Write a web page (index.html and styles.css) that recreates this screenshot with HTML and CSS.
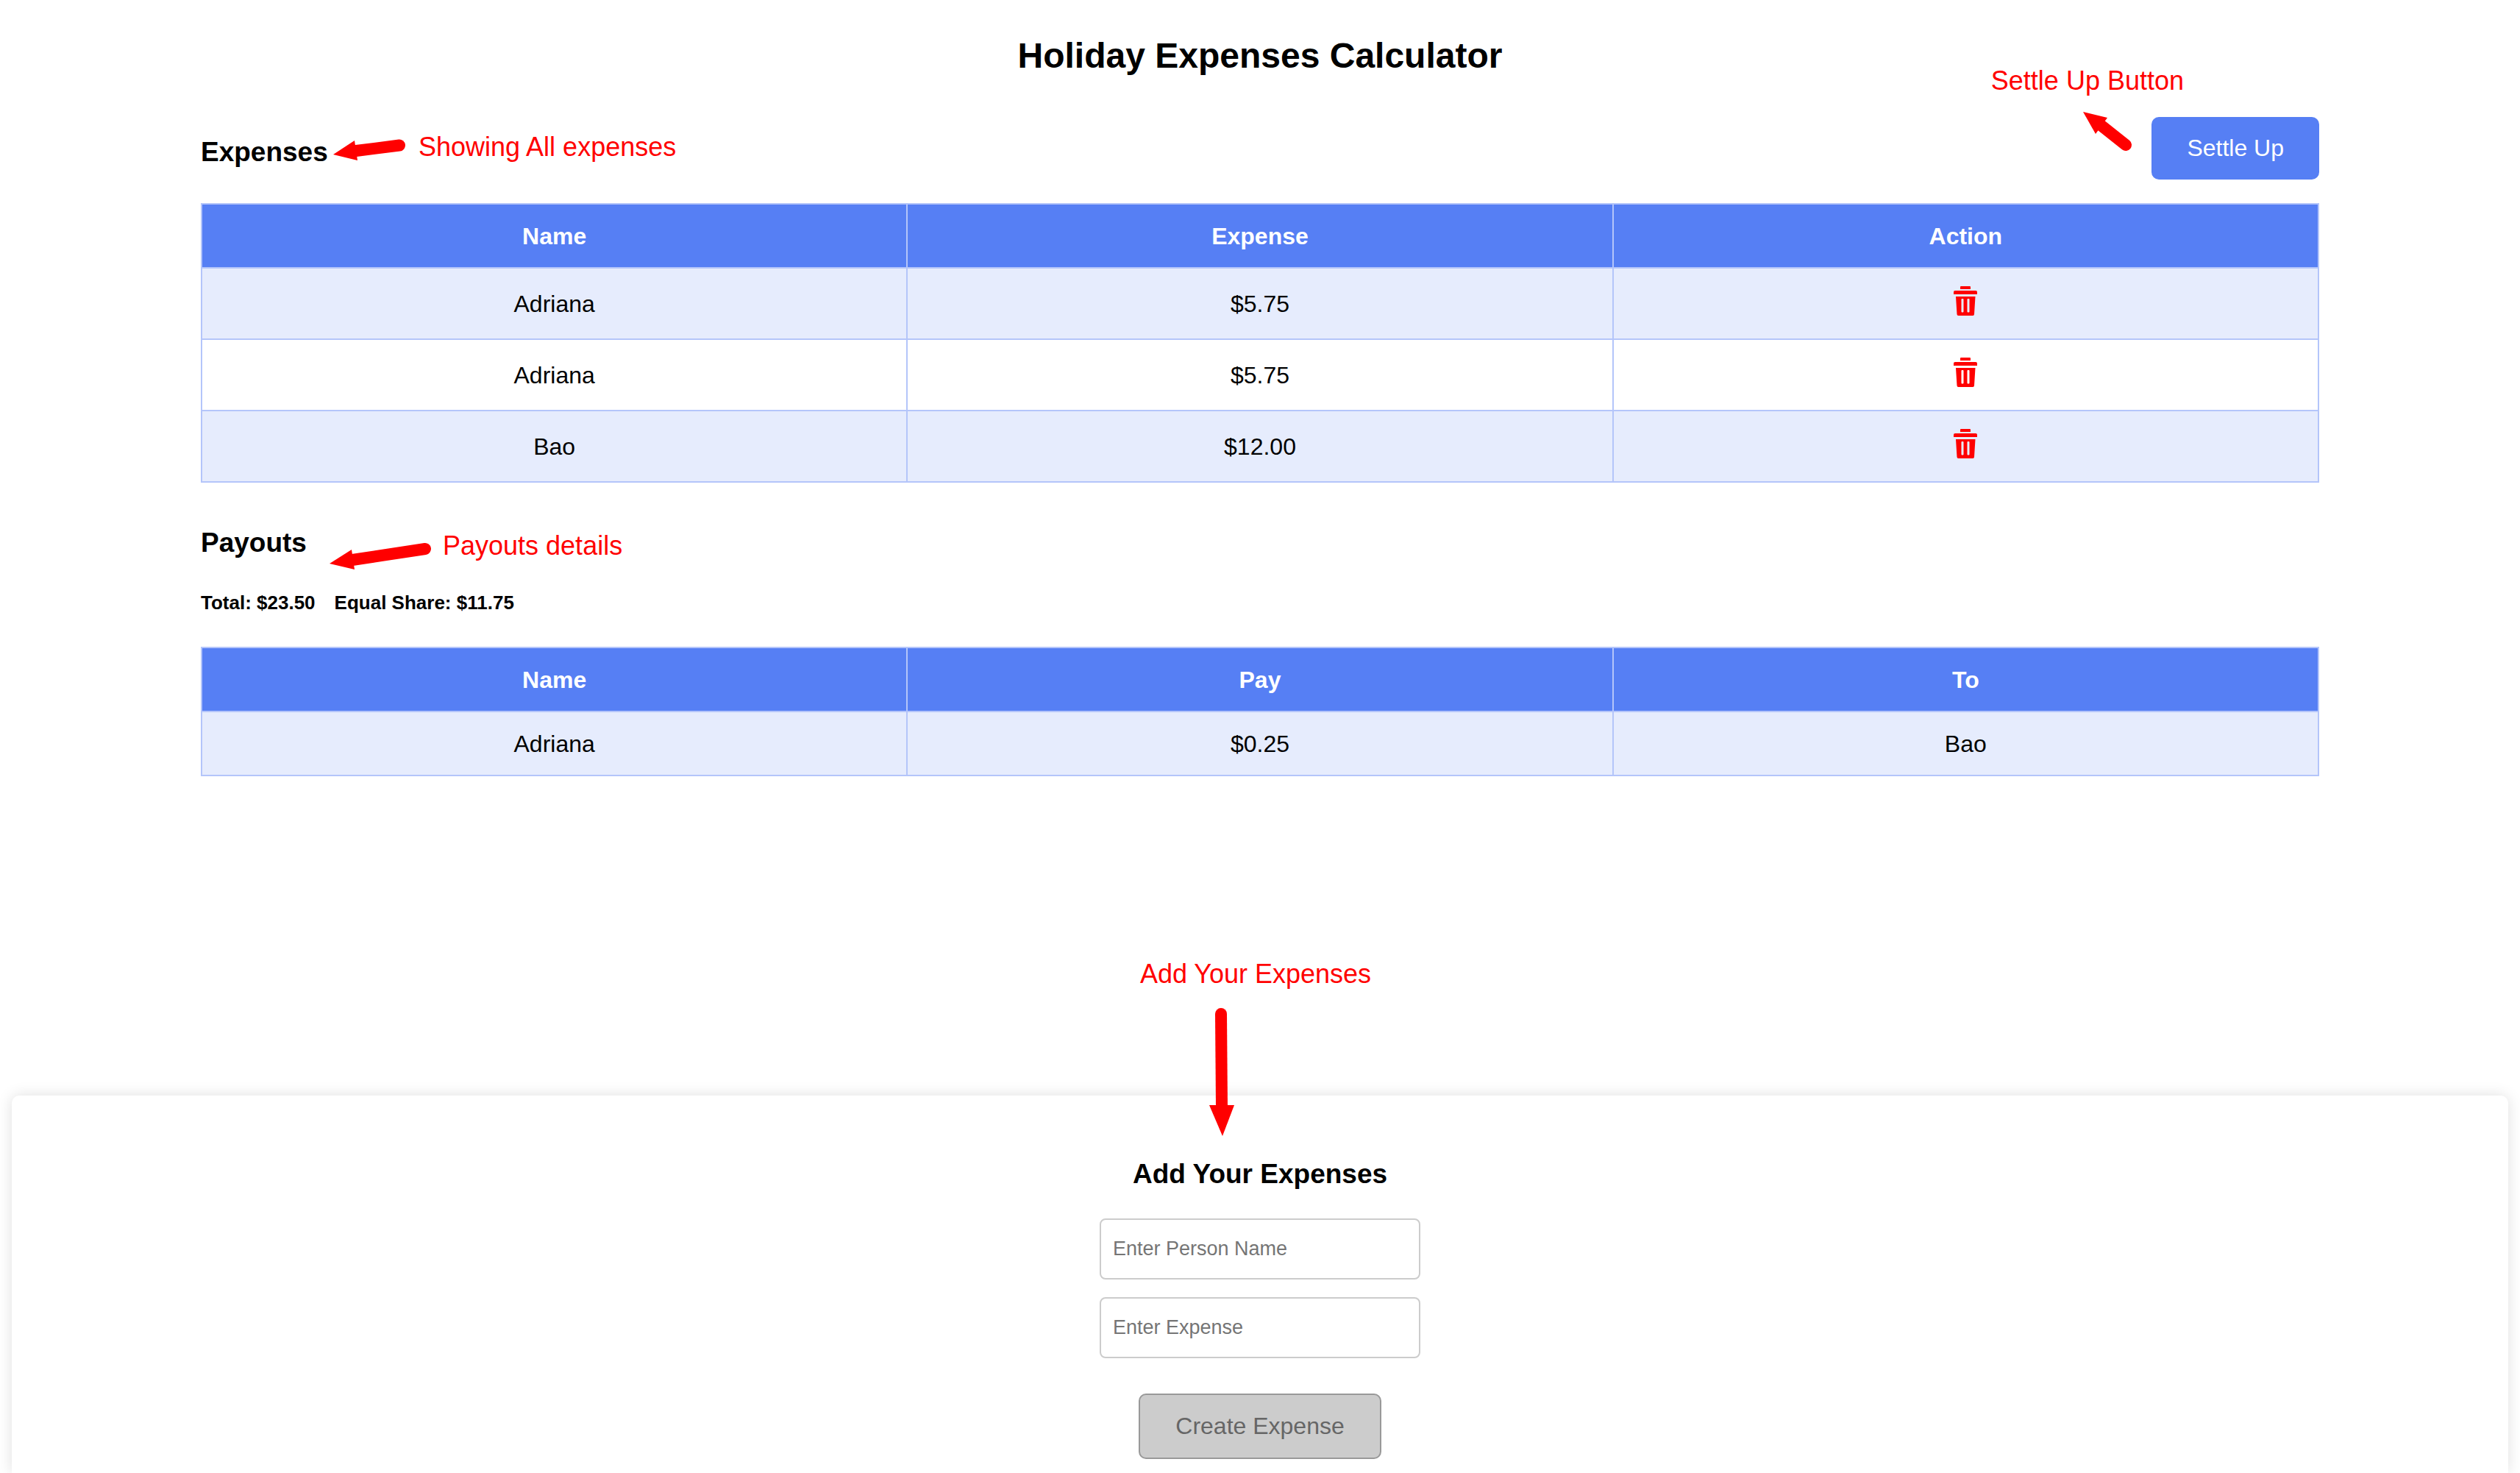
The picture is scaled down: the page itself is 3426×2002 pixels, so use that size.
FILE: index.html
```html
<!DOCTYPE html>
<html lang="en">
<head>
  <meta charset="utf-8">
  <meta name="viewport" content="width=device-width, initial-scale=1">
  <title>Holiday Expenses Calculator</title>
  <link rel="stylesheet" href="styles.css">
</head>
<body>
  <svg class="sprite" aria-hidden="true">
    <symbol id="trash" viewBox="0 0 32 40">
      <path d="M10 0h12a1 1 0 0 1 1 1v3H9V1a1 1 0 0 1 1-1z"/>
      <path d="M2 6h28a2 2 0 0 1 2 2v3H0V8a2 2 0 0 1 2-2z"/>
      <path fill-rule="evenodd" d="M3 14h26.500l-1.500 24a2 2 0 0 1-2 2H6.500a2 2 0 0 1-2-2zM11.500 17a1 1 0 0 0-1 1v16.500a1 1 0 0 0 1 1h1a1 1 0 0 0 1-1V18a1 1 0 0 0-1-1zM19.500 17a1 1 0 0 0-1 1v16.500a1 1 0 0 0 1 1h1a1 1 0 0 0 1-1V18a1 1 0 0 0-1-1z"/>
    </symbol>
  </svg>

  <main class="container">
    <h1 class="title">Holiday Expenses Calculator</h1>

    <section class="section">
      <div class="section-head">
        <h2 class="heading">Expenses</h2>
        <button class="button" type="button">Settle Up</button>
      </div>
      <table class="table">
        <thead>
          <tr><th scope="col">Name</th><th scope="col">Expense</th><th scope="col">Action</th></tr>
        </thead>
        <tbody>
          <tr><td>Adriana</td><td>$5.75</td><td class="action"><button class="delete" type="button" aria-label="Delete"><svg class="trash"><use href="#trash"/></svg></button></td></tr>
          <tr><td>Adriana</td><td>$5.75</td><td class="action"><button class="delete" type="button" aria-label="Delete"><svg class="trash"><use href="#trash"/></svg></button></td></tr>
          <tr><td>Bao</td><td>$12.00</td><td class="action"><button class="delete" type="button" aria-label="Delete"><svg class="trash"><use href="#trash"/></svg></button></td></tr>
        </tbody>
      </table>
      <div class="note note-expenses">
        <svg class="arrow" width="100" height="32" viewBox="0 0 100 32"><path class="shaft" d="M31 19L90 11.500"/><path d="M0 24L29 5L33 32z"/></svg>
        <span>Showing All expenses</span>
      </div>
      <div class="note note-settle">
        <span>Settle Up Button</span>
        <svg class="arrow" width="68" height="54" viewBox="0 0 68 54"><path class="shaft" d="M24 18L58 45"/><path d="M0 0L33 8L17 30z"/></svg>
      </div>
    </section>

    <section class="section payouts">
      <h2 class="heading">Payouts</h2>
      <p class="totals"><span>Total: $23.50</span><span>Equal Share: $11.75</span></p>
      <table class="table">
        <thead>
          <tr><th scope="col">Name</th><th scope="col">Pay</th><th scope="col">To</th></tr>
        </thead>
        <tbody>
          <tr><td>Adriana</td><td>$0.25</td><td>Bao</td></tr>
        </tbody>
      </table>
      <div class="note note-payouts">
        <svg class="arrow" width="140" height="40" viewBox="0 0 140 40"><path class="shaft" d="M31 26L130 11"/><path d="M0 31L30 12L34 39z"/></svg>
        <span>Payouts details</span>
      </div>
    </section>
  </main>

  <form class="card">
    <h2 class="heading">Add Your Expenses</h2>
    <div class="fields">
      <input class="input" type="text" placeholder="Enter Person Name" aria-label="Enter Person Name">
      <input class="input" type="text" placeholder="Enter Expense" aria-label="Enter Expense">
    </div>
    <button class="button" type="submit" disabled>Create Expense</button>
    <div class="note note-add">
      <span>Add Your Expenses</span>
      <svg class="arrow" width="36" height="176" viewBox="0 0 36 176"><path class="shaft" d="M17 10L18 136"/><path d="M1 134H35L19 176z"/></svg>
    </div>
  </form>
</body>
</html>
```

FILE: styles.css
```css
* {
  box-sizing: border-box;
}

body {
  display: flex;
  flex-direction: column;
  min-height: 100vh;
  margin: 0;
  padding: 48px 16px 0;
  background: #fff;
  color: #000;
  font-family: "Liberation Sans", Arial, Helvetica, sans-serif;
  font-size: 32px;
  line-height: 37px;
}

.sprite {
  position: absolute;
  width: 0;
  height: 0;
}

.container {
  width: 100%;
  max-width: 2880px;
  margin: 0 auto 434px;
}

.title {
  margin: 0 0 55px;
  font-size: 48px;
  line-height: 56px;
  text-align: center;
}

.heading {
  margin: 0;
  font-size: 37px;
  line-height: 43px;
}

.section {
  position: relative;
}

.section-head {
  display: flex;
  justify-content: space-between;
  align-items: flex-end;
  margin-bottom: 32px;
}

.section-head .heading {
  padding-bottom: 16px;
}

.payouts {
  margin-top: 60px;
}

.totals {
  display: flex;
  gap: 26px;
  margin: 45px 0;
  font-size: 26px;
  font-weight: bold;
  line-height: 30px;
}

.table {
  width: 100%;
  border-collapse: collapse;
  table-layout: fixed;
  text-align: center;
}

.table th,
.table td {
  padding: 25px 24px 23px;
  border: 2px solid #b4c5fa;
}

.table .action {
  padding: 24px;
}

.table th {
  background: #567ff4;
  color: #fff;
}

.table tbody tr:nth-child(odd) {
  background: #e6ecfd;
}

.delete {
  display: block;
  height: 47px;
  margin: 0 auto;
  padding: 0;
  border: 0;
  background: none;
  color: #f00;
  cursor: pointer;
}

.trash {
  display: block;
  width: 32px;
  height: 40px;
  margin-bottom: 7px;
  fill: currentColor;
}

.button {
  padding: 24px 48px;
  border: 0;
  border-radius: 10px;
  background: #567ff4;
  color: #fff;
  font: inherit;
  cursor: pointer;
}

.button:disabled {
  border: 2px solid #999;
  background: #ccc;
  color: #666;
  cursor: default;
}

.card {
  position: relative;
  display: flex;
  flex: 1 0 auto;
  flex-direction: column;
  align-items: center;
  padding: 85px 16px 16px;
  border-radius: 10px 10px 0 0;
  background: #fff;
  box-shadow: 0 0 20px rgba(0, 0, 0, 0.13);
}

.fields {
  display: flex;
  flex-direction: column;
  gap: 24px;
  width: 436px;
  max-width: 100%;
  margin: 39px 0 48px;
}

.input {
  width: 100%;
  height: 83px;
  padding: 0 16px;
  border: 2px solid #ccc;
  border-radius: 8px;
  background: #fff;
  font: inherit;
  font-size: 27px;
}

.input::placeholder {
  color: #757575;
  opacity: 1;
}

/* Red callouts drawn over the page */
.note {
  position: absolute;
  display: flex;
  color: #f00;
  font-size: 36px;
  line-height: 42px;
  white-space: nowrap;
  pointer-events: none;
}

.arrow {
  flex: none;
  fill: #f00;
}

.shaft {
  stroke: #f00;
  stroke-width: 16px;
  stroke-linecap: round;
}

.note-expenses {
  top: 20px;
  left: 180px;
  gap: 16px;
}

.note-expenses .arrow {
  margin-top: 7px;
}

.note-settle {
  top: -70px;
  right: 184px;
  flex-direction: column;
  align-items: flex-end;
  gap: 21px;
}

.note-settle .arrow {
  margin-right: 69px;
}

.note-payouts {
  top: 5px;
  left: 175px;
  gap: 14px;
}

.note-payouts .arrow {
  margin-top: 14px;
}

.note-add {
  top: -186px;
  right: 0;
  left: 0;
  flex-direction: column;
  align-items: center;
  gap: 23px;
  padding-right: 12px;
}

.note-add .arrow {
  margin-right: 92px;
}
```
